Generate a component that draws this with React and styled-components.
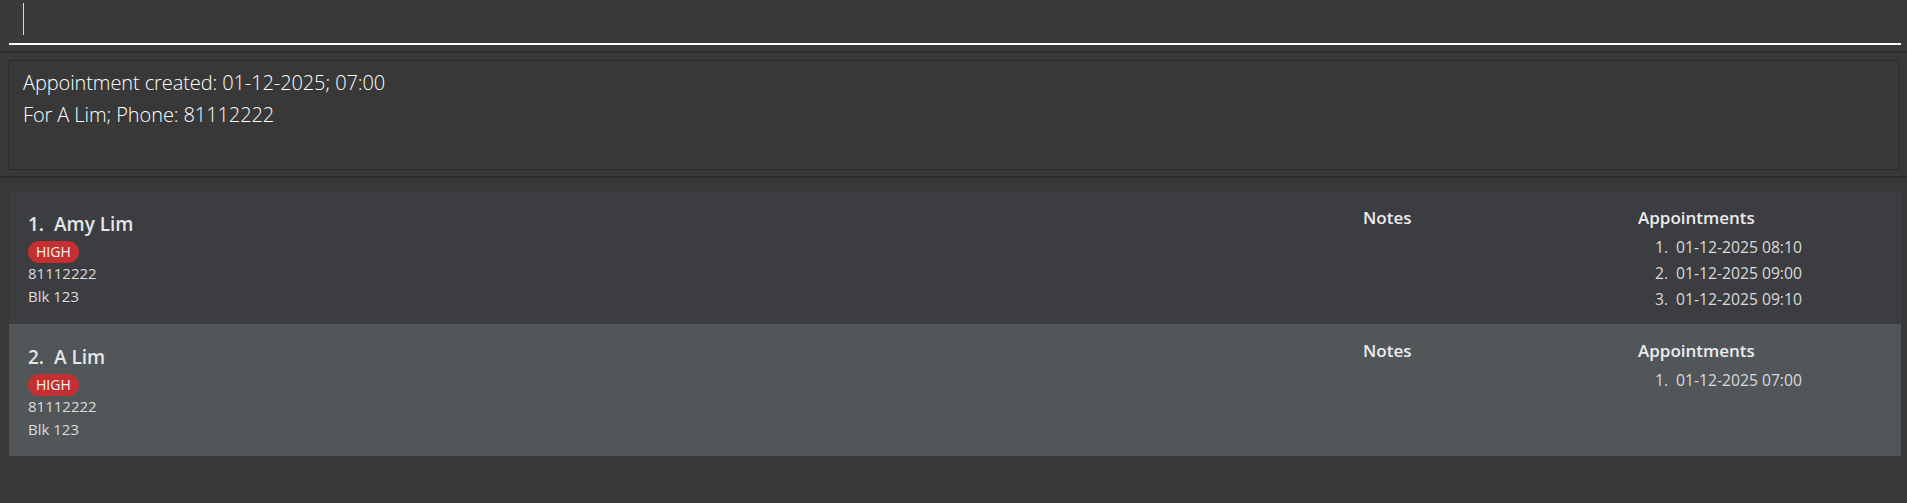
import React from 'react';
import styled, { createGlobalStyle } from 'styled-components';

const GlobalStyle = createGlobalStyle`
  html, body {
    margin: 0;
    padding: 0;
    background: #383838;
  }
  body {
    font-family: "Open Sans", "Liberation Sans", sans-serif;
  }
`;

const Page = styled.div`
  width: 1907px;
  height: 503px;
  background: #383838;
  display: flex;
  flex-direction: column;
  overflow: hidden;
`;

const CommandBar = styled.div`
  height: 51px;
  padding: 0 6px 0 9px;
  box-sizing: border-box;
  background: #3a3a3a;
`;

const CommandField = styled.div`
  height: 45px;
  box-sizing: border-box;
  border-bottom: 2px solid #ffffff;
  padding: 3px 0 0 14px;
`;

const Caret = styled.span`
  display: block;
  width: 1px;
  height: 32px;
  background: #d8d8d8;
`;

const Divider = styled.div`
  height: 2px;
  background: #2c2c2c;
`;

const ResultPane = styled.div`
  padding: 7px 7px 6px 8px;
`;

const ResultBox = styled.div`
  height: 110px;
  box-sizing: border-box;
  border: 1px solid #2c2c2c;
  padding: 6px 14px 4px;
  color: #ffffff;
  font-weight: 300;
  font-size: 20px;
  letter-spacing: -0.1px;
  line-height: 32px;
`;

const ListPane = styled.div`
  padding: 13px 6px 0 9px;
  display: flex;
  flex-direction: column;
`;

const Card = styled.div`
  display: grid;
  grid-template-columns: 1fr 275px 263px;
  height: ${({ $h }) => $h}px;
  background: ${({ $alt }) => ($alt ? '#515659' : '#3c3d40')};
`;

const Info = styled.div`
  padding: 21px 0 0 19px;
  display: flex;
  flex-direction: column;
  align-items: flex-start;
`;

const Name = styled.div`
  white-space: pre;
  font-size: 19px;
  font-weight: 600;
  line-height: 24px;
  color: #e6e6e6;
`;

const Tags = styled.div`
  display: flex;
  gap: 4px;
  margin: 5px 0 -1px;
`;

const Tag = styled.span`
  height: 22px;
  padding: 0 8px;
  border-radius: 11px;
  background: #c43032;
  color: #f4f4f4;
  font-size: 14px;
  line-height: 22px;
`;

const Detail = styled.div`
  font-size: 15px;
  line-height: 23px;
  color: #dcdcdc;
`;

const Column = styled.div`
  padding-top: 17px;
`;

const Heading = styled.div`
  font-size: 17px;
  font-weight: 600;
  line-height: 20px;
  color: #ececec;
`;

const ApptList = styled.ol`
  list-style: none;
  margin: 6px 0 0;
  padding: 0 0 0 17px;
`;

const ApptItem = styled.li`
  display: flex;
  font-size: 15.7px;
  line-height: 26px;
  color: #dadada;
`;

const Num = styled.span`
  width: 21px;
`;

const persons = [
  { name: 'Amy Lim', phone: '81112222', address: 'Blk 123', tags: ['HIGH'], appts: ['01-12-2025 08:10', '01-12-2025 09:00', '01-12-2025 09:10'], h: 133 },
  { name: 'A Lim', phone: '81112222', address: 'Blk 123', tags: ['HIGH'], appts: ['01-12-2025 07:00'], h: 132 },
];

export default function App() {
  return (
    <Page>
      <GlobalStyle />
      <CommandBar>
        <CommandField>
          <Caret />
        </CommandField>
      </CommandBar>
      <Divider />
      <ResultPane>
        <ResultBox>
          <div>Appointment created: 01-12-2025; 07:00</div>
          <div>For A Lim; Phone: 81112222</div>
        </ResultBox>
      </ResultPane>
      <Divider />
      <ListPane>
        {persons.map((p, i) => (
          <Card key={p.name} $alt={i % 2 === 1} $h={p.h}>
            <Info>
              <Name>{`${i + 1}.  ${p.name}`}</Name>
              <Tags>
                {p.tags.map((t) => (
                  <Tag key={t}>{t}</Tag>
                ))}
              </Tags>
              <Detail>{p.phone}</Detail>
              <Detail>{p.address}</Detail>
            </Info>
            <Column>
              <Heading>Notes</Heading>
            </Column>
            <Column>
              <Heading>Appointments</Heading>
              <ApptList>
                {p.appts.map((a, j) => (
                  <ApptItem key={a}>
                    <Num>{j + 1}.</Num>
                    {a}
                  </ApptItem>
                ))}
              </ApptList>
            </Column>
          </Card>
        ))}
      </ListPane>
    </Page>
  );
}
